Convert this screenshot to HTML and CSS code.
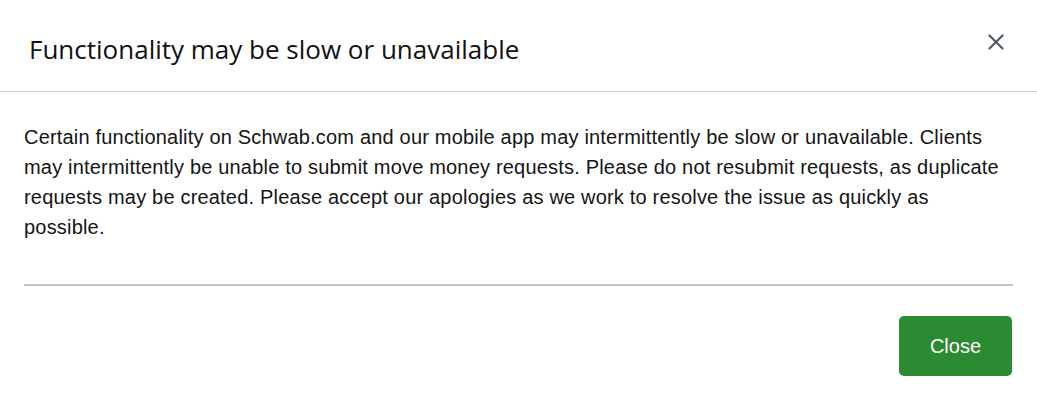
FILE: index.html
```html
<!DOCTYPE html>
<html lang="en">
<head>
<meta charset="utf-8">
<title>Functionality may be slow or unavailable</title>
<link rel="stylesheet" href="styles.css">
</head>
<body>
<div class="modal">
  <div class="modal-header">
    <h2 class="modal-title">Functionality may be slow or unavailable</h2>
    <button class="icon-close" aria-label="Close">
      <svg width="16" height="16" viewBox="0 0 16 16"><path d="M1.5 1.5 L14.5 14.5 M14.5 1.5 L1.5 14.5" stroke="#525c67" stroke-width="2.2" stroke-linecap="round" fill="none"/></svg>
    </button>
  </div>
  <div class="modal-body">
    <p class="message">Certain functionality on Schwab.com and our mobile app may intermittently be slow or unavailable. Clients may intermittently be unable to submit move money requests. Please do not resubmit requests, as duplicate requests may be created. Please accept our apologies as we work to resolve the issue as quickly as possible.</p>
  </div>
  <div class="modal-footer">
    <button class="btn-close">Close</button>
  </div>
</div>
</body>
</html>
```
FILE: styles.css
```css
html, body {
  margin: 0;
  padding: 0;
  background: #ffffff;
}
.modal {
  width: 1037px;
  height: 400px;
  display: flex;
  flex-direction: column;
  font-family: "Liberation Sans", Arial, sans-serif;
  color: #1a1a1a;
}
.modal-header {
  box-sizing: border-box;
  height: 92px;
  border-bottom: 1px solid #cfcfcf;
  display: flex;
  align-items: flex-start;
  justify-content: space-between;
  padding: 31px 24px 0 29px;
}
.modal-title {
  margin: 0;
  font-family: "Open Sans", sans-serif;
  font-weight: 400;
  font-size: 26px;
  line-height: 36px;
  color: #111;
}
.icon-close {
  border: 0;
  background: none;
  padding: 0;
  width: 16px;
  height: 16px;
  margin: 3px 9px 0 0;
  display: flex;
}
.modal-body {
  padding: 30px 24px 0 24px;
}
.message {
  margin: 0;
  font-size: 20px;
  line-height: 30px;
  letter-spacing: 0.19px;
  color: #141414;
  padding-bottom: 42px;
  border-bottom: 2px solid #c4c4c4;
}
.modal-footer {
  display: flex;
  justify-content: flex-end;
  padding: 30px 25px 24px 24px;
}
.btn-close {
  width: 113px;
  height: 60px;
  border: 0;
  border-radius: 5px;
  background: #2b8a32;
  color: #ffffff;
  font-family: "Liberation Sans", Arial, sans-serif;
  font-size: 20px;
  cursor: pointer;
}
```
